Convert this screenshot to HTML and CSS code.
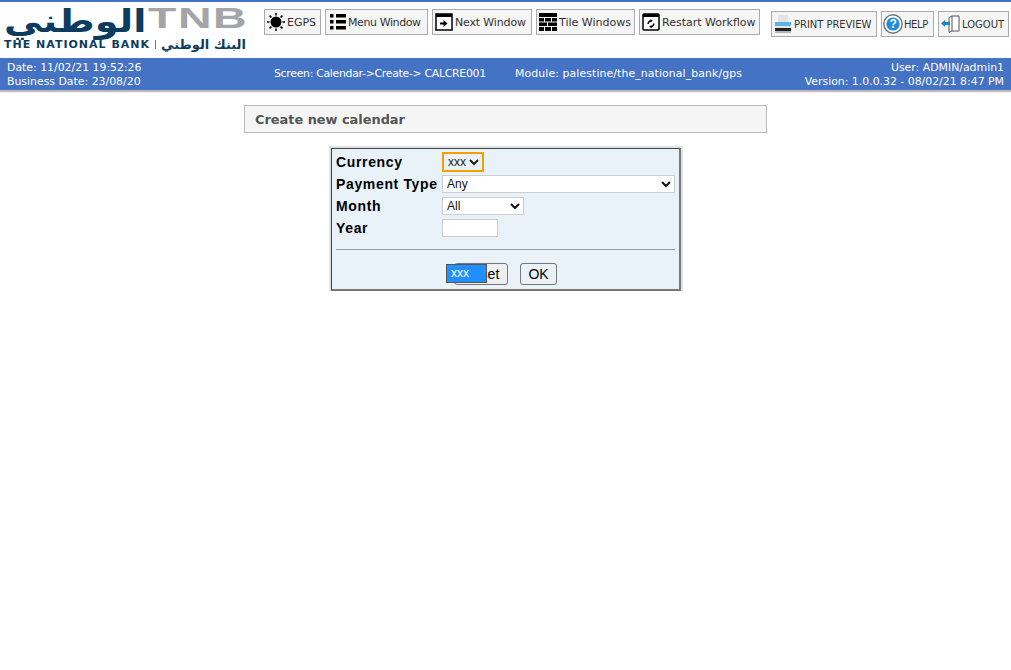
FILE: index.html
```html
<!DOCTYPE html>
<html>
<head>
    <meta charset="UTF-8">
    <title>Create new calendar</title>
    <link rel="stylesheet" href="styles.css">
</head>
<body>
    <!-- Top header -->
    <div class="header">
        <div class="logo">
            <div class="logo-top">
                <span class="logo-ar" lang="ar">الوطني</span>
                <span class="logo-tnb">TNB</span>
            </div>
            <div class="logo-bottom">
                <span class="logo-en">THE NATIONAL BANK</span>
                <span class="logo-sep"></span>
                <span class="logo-ar-small" lang="ar">البنك الوطني</span>
            </div>
        </div>
        <div class="toolbar">
            <button class="tool-button btn-egps">
                <svg width="18" height="18" viewBox="0 0 18 18"><circle cx="9" cy="9" r="5.500" fill="#000"/><path d="M9 0v2.500M9 15.500V18M0 9h2.500M15.500 9H18M2.600 2.600l1.800 1.800M13.600 13.600l1.800 1.800M2.600 15.400l1.800-1.800M13.600 4.400l1.800-1.800" stroke="#000" stroke-width="1.500" fill="none"/></svg>
                EGPS
            </button>
            <button class="tool-button btn-menu">
                <svg width="18" height="18" viewBox="0 0 18 18"><path d="M2 1h3.500v3.500H2zM8 1h10v3.500H8zM2 7h3.500v3.500H2zM8 7h10v3.500H8zM2 13h3.500v3.500H2zM8 13h10v3.500H8z" fill="#000"/></svg>
                Menu Window
            </button>
            <button class="tool-button btn-next">
                <svg width="18" height="18" viewBox="0 0 18 18"><rect x="1" y="1" width="16" height="16" fill="#fff" stroke="#000" stroke-width="1.500"/><path d="M1 1h16v3H1z" fill="#000"/><path d="M5 9.500h3.500V7l4 3.500-4 3.500v-2.500H5z" fill="#000"/></svg>
                Next Window
            </button>
            <button class="tool-button btn-tile">
                <svg width="18" height="18" viewBox="0 0 18 18"><path d="M0 0h18v4H0zM0 5h5v3.500H0zM6 5h6v3.500H6zM13 5h5v3.500h-5zM0 9.500h8V13H0zM9 9.500h9V13H9zM0 14h5v4H0zM6 14h6v4H6zM13 14h5v4h-5z" fill="#000"/></svg>
                Tile Windows
            </button>
            <button class="tool-button btn-restart">
                <svg width="18" height="18" viewBox="0 0 18 18"><rect x="1" y="1" width="16" height="16" rx="1" fill="#fff" stroke="#000" stroke-width="1.500"/><path d="M1 1h16v3H1z" fill="#000"/><path d="M6.200 11a3 3 0 0 1 3-3.200M11.800 10.500a3 3 0 0 1-3 3.200" stroke="#000" stroke-width="1.600" fill="none"/><path d="M8.500 6l2.300 1.800-2.300 1.800zM9.500 12l-2.300 1.800 2.300 1.500z" fill="#000"/></svg>
                Restart Workflow
            </button>
        </div>
        <div class="toolbar toolbar-right">
            <button class="tool-button caps btn-print">
                <svg width="18" height="18" viewBox="0 0 18 18"><rect x="4" y="0" width="10" height="7" fill="#e3e3e3"/><rect x="1" y="7" width="16" height="4" fill="#5db4e0"/><rect x="1" y="11" width="16" height="2" fill="#dfe6ea"/><rect x="1" y="13" width="16" height="3" fill="#222"/><rect x="1" y="16" width="16" height="2" fill="#b5b5b5"/></svg>
                PRINT PREVIEW
            </button>
            <button class="tool-button caps btn-help">
                <svg class="icon-big" width="20" height="20" viewBox="0 0 20 20"><circle cx="10" cy="10" r="9.200" fill="#fff" stroke="#6d7884" stroke-width="1.400"/><circle cx="10" cy="10" r="6.600" fill="#1f8ae0"/><text x="10" y="14" class="help-mark" text-anchor="middle">?</text></svg>
                HELP
            </button>
            <button class="tool-button caps btn-logout">
                <svg width="19" height="18" viewBox="0 0 19 18"><path d="M8 2.500l3-1.500h7v15h-7l-3 1.500z" fill="#fff" stroke="#555" stroke-width="1"/><path d="M11 1v15" stroke="#555" stroke-width="1"/><path d="M0 8.500l4-3.500v2h5v3H4v2z" fill="#1b87c9"/></svg>
                LOGOUT
            </button>
        </div>
    </div>

    <!-- Status bar -->
    <div class="status-bar">
        <div class="status-left">
            <div>Date: 11/02/21 19:52:26</div>
            <div>Business Date: 23/08/20</div>
        </div>
        <div class="status-screen">Screen: Calendar-&gt;Create-&gt; CALCRE001</div>
        <div class="status-module">Module: palestine/the_national_bank/gps</div>
        <div class="status-right">
            <div>User: ADMIN/admin1</div>
            <div>Version: 1.0.0.32 - 08/02/21 8:47 PM</div>
        </div>
    </div>

    <!-- Page content -->
    <div class="content">
        <div class="page-title">Create new calendar</div>
        <div class="form-box">
            <div class="form-rows">
                <label class="form-label">Currency</label>
                <div><select class="currency"><option>xxx</option></select></div>
                <label class="form-label">Payment Type</label>
                <div><select class="payment"><option>Any</option></select></div>
                <label class="form-label">Month</label>
                <div><select class="month"><option>All</option></select></div>
                <label class="form-label">Year</label>
                <div><input class="year" type="text"></div>
            </div>
            <hr class="divider">
            <div class="form-buttons">
                <div class="reset-wrap">
                    <button class="form-button reset">Reset</button>
                    <div class="dropdown-list">xxx</div>
                </div>
                <button class="form-button ok">OK</button>
            </div>
        </div>
    </div>
</body>
</html>
```

FILE: styles.css
```css
body {
    margin: 0;
    background-color: #fff;
    font-family: "DejaVu Sans", sans-serif;
}
.header {
    display: flex;
    height: 56px;
    border-top: 2px solid #4472c4;
}
.logo {
    flex: none;
    width: 264px;
    padding: 3px 0 0 4px;
    box-sizing: border-box;
}
.logo-top {
    display: flex;
    align-items: center;
    height: 32px;
}
.logo-ar {
    flex: none;
    width: 144px;
    font-weight: bold;
    font-size: 32px;
    line-height: 32px;
    color: #0d3c61;
    transform: scaleX(1.2);
    transform-origin: left center;
}
.logo-tnb {
    flex: none;
    font-family: "Liberation Sans", sans-serif;
    font-weight: bold;
    font-size: 30px;
    line-height: 26px;
    align-self: flex-start;
    letter-spacing: 1px;
    color: #a3a5a8;
    transform: scaleX(1.55);
    transform-origin: left center;
}
.logo-bottom {
    display: flex;
    align-items: center;
    height: 14px;
    white-space: nowrap;
}
.logo-en {
    font-weight: bold;
    font-size: 11px;
    letter-spacing: 1px;
    color: #0d3c61;
}
.logo-sep {
    width: 1px;
    height: 9px;
    margin: 0 5px;
    background-color: #777;
}
.logo-ar-small {
    font-weight: bold;
    font-size: 13px;
    color: #0d3c61;
}
.toolbar {
    flex: none;
    display: flex;
    gap: 4px;
    margin-top: 7px;
    align-items: flex-start;
}
.toolbar-right {
    margin-top: 9px;
    margin-left: 11px;
}
.tool-button {
    display: flex;
    align-items: center;
    gap: 2px;
    height: 26px;
    padding: 0 0 0 2px;
    border: 1px solid #aaa;
    background-color: #f5f5f5;
    font-family: "DejaVu Sans", sans-serif;
    font-size: 11px;
    color: #333;
    white-space: nowrap;
}
.tool-button.caps {
    font-size: 10px;
}
.btn-egps { width: 57px; }
.btn-menu { width: 103px; letter-spacing: -0.400px; }
.btn-next { width: 100px; letter-spacing: -0.150px; }
.btn-tile { width: 99px; }
.btn-restart { width: 121px; }
.btn-print { width: 106px; letter-spacing: -0.050px; }
.btn-help { width: 53px; letter-spacing: -0.400px; }
.btn-logout { width: 71px; }
.icon-big {
    margin: 0 -1px;
}
.help-mark {
    font-family: "Liberation Sans", sans-serif;
    font-weight: bold;
    font-size: 12px;
    fill: #fff;
}
.status-bar {
    display: flex;
    height: 32px;
    padding: 3px 7px 0;
    box-sizing: border-box;
    background-color: #4472c4;
    box-shadow: 0 2px 1px #bbb;
    color: #fff;
    font-size: 10.900px;
    line-height: 14px;
    white-space: nowrap;
}
.status-left {
    width: 267px;
}
.status-screen {
    width: 241px;
    margin-top: 6px;
    letter-spacing: -0.300px;
}
.status-module {
    margin-top: 6px;
    letter-spacing: 0.100px;
}
.status-right {
    margin-left: auto;
    text-align: right;
}
.content {
    display: flex;
    flex-direction: column;
    align-items: flex-start;
    padding: 15px 0 0 244px;
}
.page-title {
    width: 523px;
    height: 28px;
    padding-left: 10px;
    box-sizing: border-box;
    border: 1px solid #bbb;
    background-color: #f5f5f5;
    color: #555;
    font-weight: bold;
    font-size: 12.900px;
    line-height: 27px;
}
.form-box {
    width: 350px;
    height: 143px;
    margin: 15px 0 0 87px;
    padding: 2px 4px 0;
    box-sizing: border-box;
    border-style: solid;
    border-width: 1px 2px 2px 1px;
    border-color: #444 #777 #777 #444;
    box-shadow: 0 0 0 2px #dfe3e8;
    background-color: #e9f1f9;
    font-family: "Liberation Sans", sans-serif;
}
.form-rows {
    display: grid;
    grid-template-columns: 106px 1fr;
    grid-auto-rows: 22px;
    align-items: center;
}
.form-label {
    font-weight: bold;
    font-size: 14px;
    letter-spacing: 0.650px;
    color: #000;
}
.form-rows > div {
    display: flex;
    align-items: center;
}
select, .year {
    height: 18px;
    box-sizing: border-box;
    border: 1px solid #ccc;
    background-color: #fff;
    font-family: "Liberation Sans", sans-serif;
    font-size: 12px;
    color: #111;
    padding: 0;
}
.currency {
    width: 42px;
    height: 20px;
    border: 2px solid #f5a000;
    border-radius: 0;
    background-color: #e9f1f9;
    outline: none;
    color: #221;
}
.payment {
    width: 233px;
}
.month {
    width: 82px;
}
.year {
    width: 56px;
}
.divider {
    height: 1px;
    margin: 10px 0 0;
    border: none;
    background-color: #999;
}
.form-buttons {
    display: flex;
    gap: 12px;
    margin: 13px 0 0 118px;
}
.reset-wrap {
    position: relative;
}
.form-button {
    height: 22px;
    padding: 0;
    border: 1px solid #777;
    border-radius: 3px;
    background-color: #efefef;
    font-family: "Liberation Sans", sans-serif;
    font-size: 14px;
    color: #000;
}
.reset {
    width: 54px;
}
.ok {
    width: 37px;
    background-color: #e9f1f9;
}
.dropdown-list {
    position: absolute;
    left: -8px;
    top: 1px;
    width: 41px;
    height: 19px;
    padding-left: 4px;
    box-sizing: border-box;
    border: 1px solid #555;
    background-color: #1e90ff;
    color: #fff;
    font-size: 12px;
    line-height: 17px;
}
```
